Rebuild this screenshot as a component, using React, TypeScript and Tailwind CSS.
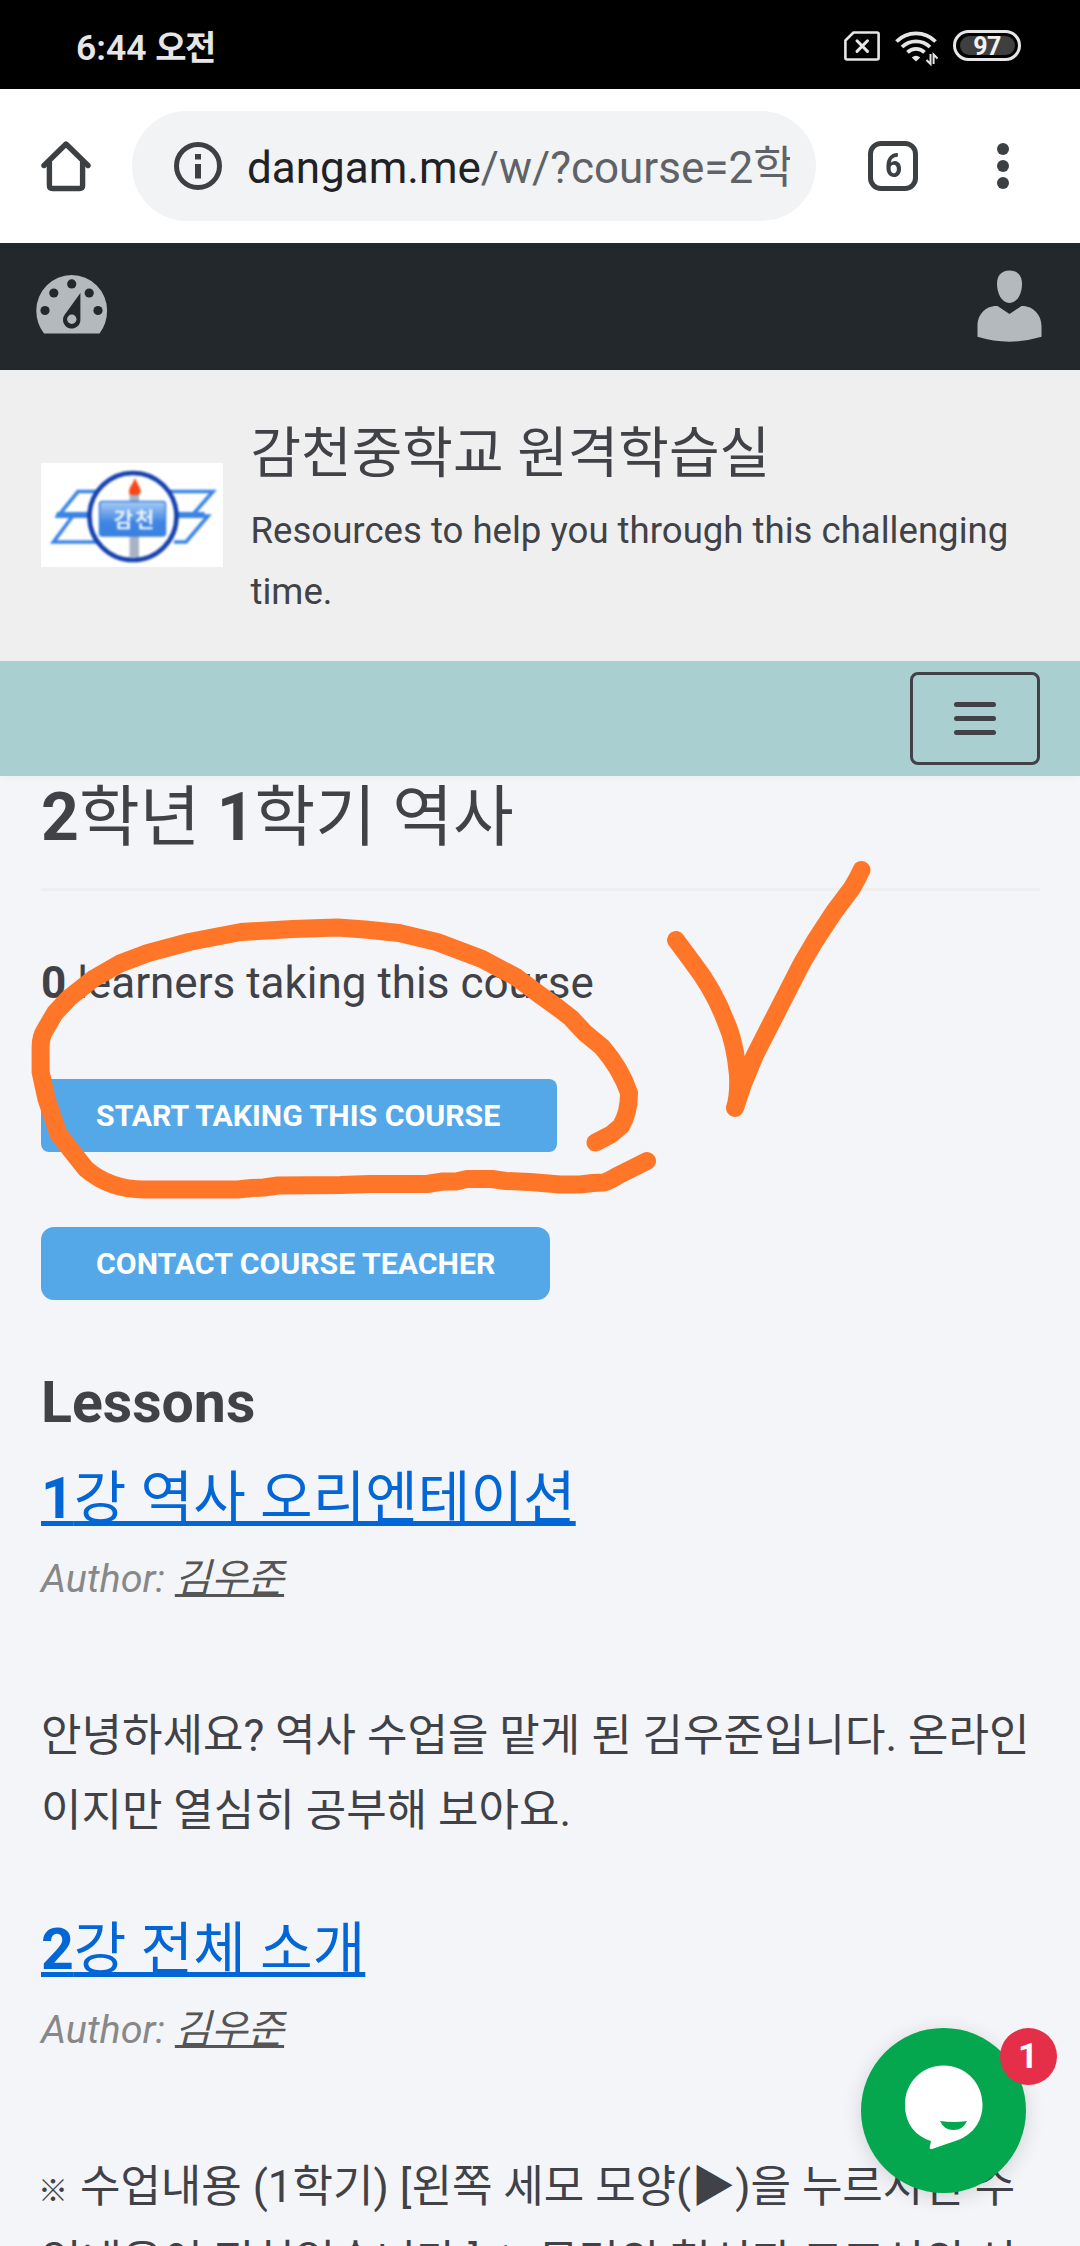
import React from "react";

function StatusBar() {
  return (
    <div className="flex h-[89px] items-center bg-black pl-[76px] pr-[59px] text-[#e6e6e6]">
      <span className="mt-[7px] text-[35.5px] font-semibold leading-[48px]">
        6:44 <span className="text-[34px] tracking-[-1.5px]">오전</span>
      </span>
      <div className="ml-auto flex h-[34px] items-start gap-[15px] pb-0">
        <svg width="36" height="34" viewBox="0 0 36 34" fill="none" stroke="#e6e6e6" className="mt-[3px]">
          <path d="M9.5 1.5H33Q34.6 1.5 34.6 3V27Q34.6 28.5 33 28.5H3Q1.4 28.5 1.4 27V9.500Z" strokeWidth="2.6" strokeLinejoin="round" />
          <path d="M13 9.800L23.500 20.400M23.500 9.800L13 20.400" strokeWidth="3" strokeLinecap="round" />
        </svg>
        <svg width="43" height="36" viewBox="0 0 43 36" fill="none" stroke="#e6e6e6" strokeWidth="3.8" className="mt-[2px]">
          <path d="M1.500 11.500A27.500 27.500 0 0 1 40.500 11.500" />
          <path d="M7 17A20 20 0 0 1 35 17" />
          <path d="M12.500 22.300A12.500 12.500 0 0 1 29.500 22.300" />
          <path d="M16.800 27.500A6 6 0 0 1 25.200 27.500L21 31.500Z" fill="#e6e6e6" stroke="none" />
          <path d="M35.500 24V34L31.500 30M38.600 34V24.500L42.500 28.500" strokeWidth="2" />
        </svg>
        <div className="mt-[2px] flex h-[31px] w-[68px] items-center justify-center rounded-full border-[3px] border-[#e6e6e6]">
          <div className="flex h-[19px] w-[55px] items-center justify-center rounded-full bg-[#3f3f3f] pt-[2px] text-[25px] font-bold leading-[19px] tracking-[-0.5px] text-[#f2f2f2]">
            97
          </div>
        </div>
      </div>
    </div>
  );
}

function BrowserBar() {
  return (
    <div className="flex h-[154px] items-center bg-white pl-[41px]">
      <svg width="50" height="52" viewBox="0 0 50 52" fill="none" stroke="#3c4043" strokeWidth="5.400" strokeLinecap="round" strokeLinejoin="round">
        <path d="M3 25.500L25 4L47 25.500" />
        <path d="M8.400 22V45.500Q8.400 48.500 11.400 48.500H38.600Q41.600 48.500 41.600 45.500V22" />
      </svg>
      <div className="ml-[41px] flex h-[110px] w-[684px] items-center rounded-full bg-[#f1f3f4] pl-[42px]">
        <svg width="48" height="48" viewBox="0 0 48 48" fill="none">
          <circle cx="24" cy="24" r="21.500" stroke="#3c4043" strokeWidth="5" />
          <path d="M21 12H27V17.500H21ZM21 22H27V36.500H21Z" fill="#3c4043" />
        </svg>
        <div className="ml-[25px] mt-[4px] w-[543px] overflow-hidden whitespace-nowrap text-[44px] leading-[64px] text-[#5f6368]">
          <span className="text-[#202124]">dangam.me</span>/w/?course=2학
        </div>
      </div>
      <div className="ml-[52px] flex h-[50px] w-[50px] items-center justify-center rounded-[13px] border-[5px] border-[#3c4043] text-[33px] font-bold leading-[40px] text-[#3c4043]">
        <span className="scale-x-90">6</span>
      </div>
      <div className="ml-[79px] flex flex-col gap-[5px]">
        <span className="h-[12px] w-[12px] rounded-full bg-[#3c4043]" />
        <span className="h-[12px] w-[12px] rounded-full bg-[#3c4043]" />
        <span className="h-[12px] w-[12px] rounded-full bg-[#3c4043]" />
      </div>
    </div>
  );
}

function AdminBar() {
  return (
    <div className="flex h-[127px] items-start justify-between bg-[#23282d] pl-[36px] pr-[38px]">
      <svg width="72" height="59" viewBox="0 0 72 59" className="mt-[32px]">
        <path d="M8 58.500Q0.300 48.500 0.300 35.500A35.400 35.400 0 0 1 71.100 35.500Q71.100 48.500 63.500 58.500Z" fill="#b4b9be" />
        <g fill="#23282d">
          <circle cx="9" cy="35.500" r="4.600" />
          <circle cx="17.800" cy="18" r="4.600" />
          <circle cx="35.700" cy="8.900" r="4.600" />
          <circle cx="53.200" cy="18" r="4.600" />
          <circle cx="62" cy="35.500" r="4.600" />
          <path d="M44.400 18V44.800A8.700 8.700 0 1 1 28.500 40Z" />
        </g>
        <circle cx="35.800" cy="44.300" r="4.700" fill="#b4b9be" />
      </svg>
      <svg width="65" height="72" viewBox="0 0 65 72" fill="#b4b9be" className="mt-[27px]">
        <path d="M32.500 0.500C41 0.500 45 6 45 14C45 23 40.500 33 32.500 33S20 23 20 14C20 6 24 0.500 32.500 0.500Z" />
        <path d="M0.500 66.800V56C0.500 45 8 35.500 20.500 36L32.500 44L44.500 36C56 35.500 64.500 45 64.500 56V66.800Q32.500 76.500 0.500 66.800Z" />
      </svg>
    </div>
  );
}

function SchoolLogo() {
  return (
    <svg width="182" height="104" viewBox="0 0 182 104" className="mt-[93px] shrink-0 bg-white">
      <defs>
        <linearGradient id="plate" x1="0" y1="0" x2="0" y2="1">
          <stop offset="0" stopColor="#a9cdf5" />
          <stop offset="0.600" stopColor="#3f85e3" />
          <stop offset="1" stopColor="#3a80df" />
        </linearGradient>
      </defs>
      <g className="blur-[0.8px]">
        <g fill="none" stroke="#3a84e6" strokeWidth="3.600">
          <path d="M56 28.500H37L17.500 52.500H56" />
          <path d="M56 79H12.500L31 54" />
          <path d="M126 28.500H172L151 52.500H126" />
          <path d="M133 79H145L167 53H150" />
        </g>
        <path d="M16 49H164L162 55H14Z" fill="#3a84e6" />
        <circle cx="92" cy="53.500" r="43.500" fill="white" stroke="#1641ae" strokeWidth="4.600" />
        <rect x="88.500" y="30" width="9.500" height="64" fill="#a9b3c4" />
        <path d="M94 15C96 21 100 24 99.500 29Q99 32 96 32H91Q88 32 88 29C88 24 92 21 94 15Z" fill="#fb4516" />
        <rect x="58.500" y="38.500" width="66" height="34.500" rx="3" fill="url(#plate)" stroke="#3a7fdc" strokeWidth="1.500" />
        <text x="94" y="64" textAnchor="middle" fill="#e8f2ff" fontSize="21" fontWeight="700" fontFamily="'Noto Sans CJK KR', sans-serif" letterSpacing="2">
          감천
        </text>
      </g>
    </svg>
  );
}

function SiteHeader() {
  return (
    <div className="flex h-[291px] items-start bg-[#efefef] pl-[41px]">
      <SchoolLogo />
      <div className="ml-[27.500px] mt-[50px]">
        <div className="text-[55px] leading-[66px]">감천중학교 원격학습실</div>
        <div className="mt-[14px] w-[790px] text-[36.600px] leading-[61px]">
          Resources to help you through this challenging time.
        </div>
      </div>
    </div>
  );
}

function MenuBar() {
  return (
    <div className="flex h-[115px] justify-end bg-[#a9cfd0] pr-[40px] pt-[11px] shadow-[0_2px_6px_rgba(120,130,150,0.06)]">
      <div className="flex h-[93px] w-[130px] flex-col items-center justify-center gap-[9px] rounded-[8px] border-[3px] border-[#404248]">
        <span className="h-[5px] w-[42px] rounded-full bg-[#404248]" />
        <span className="h-[5px] w-[42px] rounded-full bg-[#404248]" />
        <span className="h-[5px] w-[42px] rounded-full bg-[#404248]" />
      </div>
    </div>
  );
}

function LessonHead({ num, title }: { num: string; title: string }) {
  return (
    <>
      <h3 className="text-[57.200px] leading-[68px] text-[#0366d6] underline decoration-[5px] underline-offset-[3px] [text-decoration-skip-ink:none]">
        <span className="font-bold">{num}</span>
        {title}
      </h3>
      <p className="mt-[12px] text-[39.600px] italic leading-[68px] text-[#888888]">
        Author:{" "}
        <a className="text-[#555555] underline decoration-[3px] underline-offset-[2px] [text-decoration-skip-ink:none]">김우준</a>
      </p>
    </>
  );
}

function Course() {
  return (
    <div className="whitespace-nowrap px-[41px] pt-[2px]">
      <h1 className="text-[66px] leading-[80px]">
        <b>2</b>학년 <b>1</b>학기 역사
      </h1>
      <div className="mr-[-1px] mt-[30px] h-[3px] bg-[#efefef]" />
      <p className="mt-[55px] text-[44px] leading-[75px]">
        <b>0</b> learners taking this course
      </p>
      <div className="mt-[58px] flex h-[73px] w-[516px] items-center rounded-[8px] bg-[#54a8e8] pl-[55px] pt-[1px] text-[30.250px] font-bold text-white">
        START TAKING THIS COURSE
      </div>
      <div className="mt-[75px] flex h-[73px] w-[509px] items-center rounded-[13px] bg-[#54a8e8] pl-[55px] pt-[1px] text-[30.250px] font-bold text-white">
        CONTACT COURSE TEACHER
      </div>
      <h2 className="mb-[28px] mt-[69px] text-[57.200px] font-bold leading-[68px]">Lessons</h2>
      <LessonHead num="1" title="강 역사 오리엔테이션" />
      <p className="mb-[68px] mt-[86px] text-[44px] leading-[74.500px]">
        안녕하세요? 역사 수업을 맡게 된 김우준입니다. 온라인
        <br />
        이지만 열심히 공부해 보아요.
      </p>
      <LessonHead num="2" title="강 전체 소개" />
      <p className="mt-[86px] text-[44px] leading-[74.500px]">
        <span className="inline-block w-[28px] -translate-x-[3px] -translate-y-[1px] text-[30px] font-bold leading-none">※</span> 수업내용 (1학기) [왼쪽 세모 모양(▶)을 누르시면 수
        <br />
        업내용이 적혀있습니다.] 1. 문명의 형성과 고조선의 성
      </p>
    </div>
  );
}

/* Freehand marker strokes laid over the page */
function MarkerStrokes() {
  return (
    <svg width="1080" height="460" viewBox="0 780 1080 460" className="pointer-events-none absolute left-0 top-[780px]" fill="none" stroke="#ff7628" strokeWidth="18" strokeLinecap="round" strokeLinejoin="round">
      <path d="M595.500 1142.500L611 1134.500L621 1126Q629 1113 629 1093Q621 1069 602 1047L585 1033L571 1018Q556 1006 540 995L516 977L482 959L437 942L399 933L365 929.500L337.500 927.500L293 929L241 932L220 936L189 942L148 953L120 963.500L93 979L69 998L55 1013L45 1030Q40.600 1037 40.600 1047V1072L46.500 1099L58.500 1134L74 1154L86 1169Q110 1189.500 144 1189.500H237.600L252 1188L264 1187.500L278 1185.500L340 1185L370 1184H427L443 1181.500H456L467 1179H492L506 1181L530 1182L560 1184.500H580L593 1183L604 1182.500Q609 1181 618 1175.500L647 1161" />
      <path d="M676 940L693 963Q714 990 726 1022Q735 1042 738 1075Q739 1095 735 1108L743 1084L755 1055L778 1010L802 963L815 941L834 912L852 888Q858 878 861.500 870" />
    </svg>
  );
}

function ChatBubble() {
  return (
    <div className="absolute left-[861px] top-[2028px] h-[165px] w-[165px] rounded-full bg-[#04a74e] shadow-[0_4px_20px_rgba(0,0,0,0.14)]">
      <svg width="165" height="165" viewBox="0 0 165 165">
        <path d="M82.500 37.500C104 37.500 121.500 54 121.500 77C121.500 94 111 107 97 112L71 121Q68.500 121.500 68.700 119.500L70 113C54 108 44 95 44 77C44 54 61 37.500 82.500 37.500Z" fill="white" />
        <path d="M79 93Q93 95 106 93Q102 102 92.500 102T79 93Z" fill="#04a74e" />
      </svg>
      <span className="absolute left-[138.500px] top-0 flex h-[57px] w-[57px] items-center justify-center rounded-full bg-[#e52f48] text-[35px] font-bold leading-none text-white">
        1
      </span>
    </div>
  );
}

export default function App() {
  return (
    <div className="relative h-[2246px] w-[1080px] overflow-hidden bg-[#f4f5f9] font-[Roboto,'Noto_Sans_CJK_KR',sans-serif] text-[#404248]">
      <StatusBar />
      <BrowserBar />
      <AdminBar />
      <SiteHeader />
      <MenuBar />
      <Course />
      <MarkerStrokes />
      <ChatBubble />
    </div>
  );
}
